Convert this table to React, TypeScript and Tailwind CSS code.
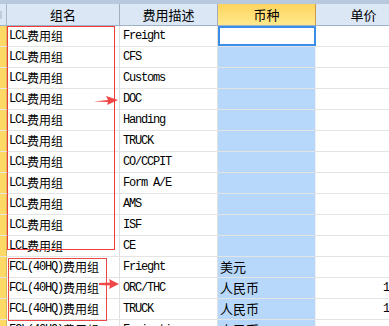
import clsx from 'clsx'

type Row = {
  group: string
  desc: string
  currency: string
  price: string
}

const rows: Row[] = [
  { group: 'LCL费用组', desc: 'Freight', currency: '', price: '' },
  { group: 'LCL费用组', desc: 'CFS', currency: '', price: '' },
  { group: 'LCL费用组', desc: 'Customs', currency: '', price: '' },
  { group: 'LCL费用组', desc: 'DOC', currency: '', price: '' },
  { group: 'LCL费用组', desc: 'Handing', currency: '', price: '' },
  { group: 'LCL费用组', desc: 'TRUCK', currency: '', price: '' },
  { group: 'LCL费用组', desc: 'CO/CCPIT', currency: '', price: '' },
  { group: 'LCL费用组', desc: 'Form A/E', currency: '', price: '' },
  { group: 'LCL费用组', desc: 'AMS', currency: '', price: '' },
  { group: 'LCL费用组', desc: 'ISF', currency: '', price: '' },
  { group: 'LCL费用组', desc: 'CE', currency: '', price: '' },
  { group: 'FCL(40HQ)费用组', desc: 'Frieght', currency: '美元', price: '' },
  { group: 'FCL(40HQ)费用组', desc: 'ORC/THC', currency: '人民币', price: '1200' },
  { group: 'FCL(40HQ)费用组', desc: 'TRUCK', currency: '人民币', price: '1500' },
  { group: 'FCL(40HQ)费用组', desc: 'Fumigation', currency: '人民币', price: '' },
]

const cellFont = {
  fontFamily: '"Liberation Mono", "Noto Sans CJK SC", monospace',
}

// 半角字母按宋体宽度 (6px) 显示
function MixedText({ text }: { text: string }) {
  const parts = text.match(/[\u4e00-\u9fa5]+|[^\u4e00-\u9fa5]+/g) ?? []
  return (
    <>
      {parts.map((p, i) =>
        /[\u4e00-\u9fa5]/.test(p) ? (
          <span key={i} className="text-[12px] font-['Noto_Sans_CJK_SC',sans-serif]">
            {p}
          </span>
        ) : (
          <span key={i} className="text-[12px] tracking-[-1.2px] font-['Liberation_Mono',monospace]">
            {p}
          </span>
        )
      )}
    </>
  )
}

function ArrowOne() {
  return (
    <svg className="pointer-events-none absolute left-[93px] top-[94px]" width="26" height="12" viewBox="0 0 26 12">
      <path d="M1 7.5 L15 6 L13 2 L25 6 L14 11 L15 8 Z" fill="#f03a3a" opacity="0.95" />
    </svg>
  )
}

function ArrowTwo() {
  return (
    <svg className="pointer-events-none absolute left-[98px] top-[278px]" width="22" height="12" viewBox="0 0 22 12">
      <path d="M1 5 L12 4.5 L11 1 L21 6 L11 11 L12 7.5 L1 7 Z" fill="#f04848" />
    </svg>
  )
}

export default function App() {
  return (
    <div className="relative h-[326px] w-[389px] overflow-hidden bg-white text-black" style={cellFont}>
      <div className="h-[4px] bg-[#b9c9dd]" />

      {/* 表头 */}
      <div className="flex h-[22px] border-b border-[#9fb1c7] bg-[#dbe7f5] text-[13px] font-['Noto_Sans_CJK_SC',sans-serif]">
        <div className="flex w-[7px] shrink-0 border-r border-[#a9b8cb]">
          <div className="mt-[7px] h-[8px] w-[2px] bg-[#c0ccda]" />
        </div>
        <div className="flex w-[113px] shrink-0 items-center justify-center border-r border-[#a3aebd]">组名</div>
        <div className="flex w-[98px] shrink-0 items-center justify-center border-r border-[#a3aebd]">费用描述</div>
        <div className="flex w-[98px] shrink-0 items-center justify-center border-r border-[#c99a4a] bg-gradient-to-b from-[#ffd45c] to-[#ffe98c]">
          币种
        </div>
        <div className="flex w-[95px] shrink-0 items-center justify-center">单价</div>
      </div>

      {rows.map((r, i) => (
        <div key={i} className="flex h-[21px] border-b border-[#e4e4e4]">
          <div className="w-[7px] shrink-0 border-r border-[#d8b45a] bg-[#ffd966]" />
          <div className="flex w-[113px] shrink-0 items-center overflow-hidden whitespace-nowrap border-r border-[#e0e0e0] pl-[2px]">
            <MixedText text={r.group} />
          </div>
          <div className="flex w-[98px] shrink-0 items-center overflow-hidden whitespace-nowrap border-r border-[#e0e0e0] pl-[3px]">
            <MixedText text={r.desc} />
          </div>
          <div
            className={clsx(
              'flex w-[98px] shrink-0 items-center overflow-hidden whitespace-nowrap pl-[2px]',
              i === 0 ? 'border-2 border-[#3a8ee8] bg-white' : 'border-r border-[#eef3f8] bg-[#b8d8fb]'
            )}
          >
            <span className="text-[13px] font-['Noto_Sans_CJK_SC',sans-serif]">{r.currency}</span>
          </div>
          <div className="flex w-[95px] shrink-0 items-center justify-end overflow-hidden whitespace-nowrap pr-[4px]">
            <MixedText text={r.price} />
          </div>
        </div>
      ))}

      {/* 标注 */}
      <div className="pointer-events-none absolute left-[7px] top-[26px] h-[224px] w-[108px] border-[1.5px] border-[#f23a3a]" />
      <div className="pointer-events-none absolute left-[8px] top-[258px] h-[63px] w-[99px] border-[1.5px] border-[#e84848]" />
      <ArrowOne />
      <ArrowTwo />
    </div>
  )
}
